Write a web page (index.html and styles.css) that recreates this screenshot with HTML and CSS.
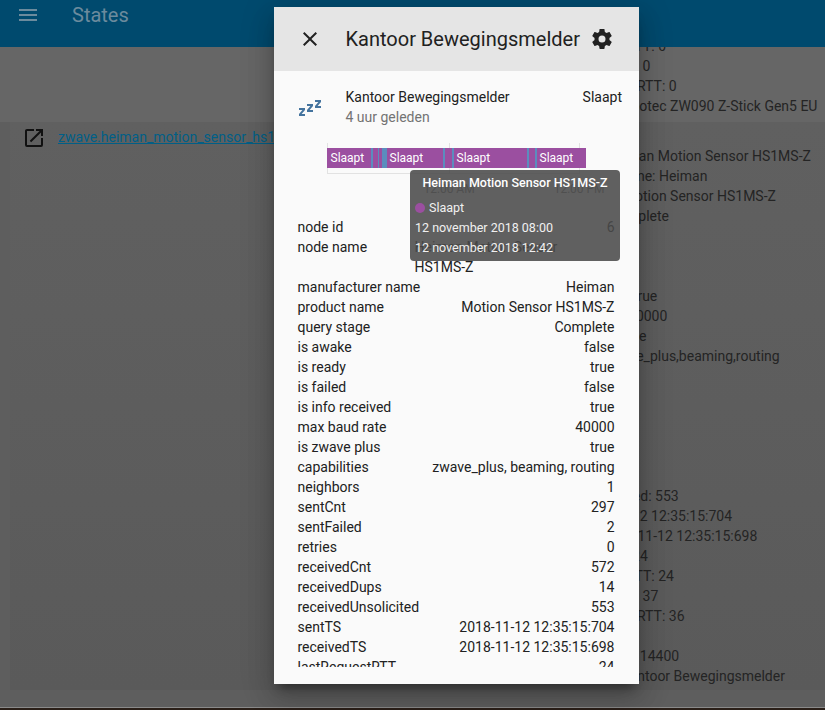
FILE: index.html
```html
<!DOCTYPE html>
<html lang="nl">
<head>
<meta charset="utf-8">
<title>States</title>
<link rel="stylesheet" href="styles.css">
</head>
<body>
<div class="page">
  <header class="appbar">
    <svg class="appbar-icon" viewBox="0 0 24 24"><path d="M3,6H21V8H3V6M3,11H21V13H3V11M3,16H21V18H3V16Z"/></svg>
    <div class="appbar-title">States</div>
  </header>
  <main class="states">
    <section class="row row-first">
      <div class="attrs">
        <div>averageRequestRTT: 0</div>
        <div>lastResponseRTT: 0</div>
        <div>averageResponseRTT: 0</div>
        <div>product_name: Aeotec ZW090 Z-Stick Gen5 EU</div>
      </div>
    </section>
    <section class="row row-second">
      <div class="entity">
        <svg class="entity-icon" viewBox="0 0 24 24"><path d="M14,3V5H17.59L7.76,14.83L9.17,16.24L19,6.41V10H21V3M19,19H5V5H12V3H5C3.89,3 3,3.9 3,5V19A2,2 0 0,0 5,21H19A2,2 0 0,0 21,19V12H19V19Z"/></svg>
        <a class="entity-link">zwave.heiman_motion_sensor_hs1ms_z</a>
      </div>
      <div class="attrs">
        <div>node_id: 6</div>
        <div>node_name: Heiman Motion Sensor HS1MS-Z</div>
        <div>manufacturer_name: Heiman</div>
        <div>product_name: Motion Sensor HS1MS-Z</div>
        <div>query_stage: Complete</div>
        <div>is_awake: false</div>
        <div>is_ready: true</div>
        <div>is_failed: false</div>
        <div>is_info_received: true</div>
        <div>max_baud_rate: 40000</div>
        <div>is_zwave_plus: true</div>
        <div>capabilities: zwave_plus,beaming,routing</div>
        <div>neighbors: 1</div>
        <div>sentCnt: 297</div>
        <div>sentFailed: 2</div>
        <div>retries: 0</div>
        <div>receivedCnt: 572</div>
        <div>receivedDups: 14</div>
        <div>receivedUnsolicited: 553</div>
        <div>sentTS: 2018-11-12 12:35:15:704</div>
        <div>receivedTS: 2018-11-12 12:35:15:698</div>
        <div>lastRequestRTT: 24</div>
        <div>averageRequestRTT: 24</div>
        <div>lastResponseRTT: 37</div>
        <div>averageResponseRTT: 36</div>
        <div>location:</div>
        <div>wake_up_interval: 14400</div>
        <div>friendly_name: Kantoor Bewegingsmelder</div>
      </div>
    </section>
  </main>
  <div class="page-edge"></div>
</div>

<div class="dialog">
  <div class="dialog-head">
    <svg class="head-icon" viewBox="0 0 24 24"><path d="M19,6.41L17.59,5L12,10.59L6.41,5L5,6.41L10.59,12L5,17.59L6.41,19L12,13.41L17.59,19L19,17.59L13.41,12L19,6.41Z"/></svg>
    <div class="dialog-title">Kantoor Bewegingsmelder</div>
    <svg class="head-icon" viewBox="0 0 24 24"><path d="M12,15.5A3.5,3.5 0 0,1 8.5,12A3.5,3.5 0 0,1 12,8.5A3.5,3.5 0 0,1 15.5,12A3.5,3.5 0 0,1 12,15.5M19.43,12.97C19.47,12.65 19.5,12.33 19.5,12C19.5,11.67 19.47,11.34 19.43,11L21.54,9.37C21.73,9.22 21.78,8.95 21.66,8.73L19.66,5.27C19.54,5.05 19.27,4.96 19.05,5.05L16.56,6.05C16.04,5.66 15.5,5.32 14.87,5.07L14.5,2.42C14.46,2.18 14.25,2 14,2H10C9.75,2 9.54,2.18 9.5,2.42L9.13,5.07C8.5,5.32 7.96,5.66 7.44,6.05L4.95,5.05C4.73,4.96 4.46,5.05 4.34,5.27L2.34,8.73C2.21,8.95 2.27,9.22 2.46,9.37L4.57,11C4.53,11.34 4.5,11.67 4.5,12C4.5,12.33 4.53,12.65 4.57,12.97L2.46,14.63C2.27,14.78 2.21,15.05 2.34,15.27L4.34,18.73C4.46,18.95 4.73,19.03 4.95,18.95L7.44,17.94C7.96,18.34 8.5,18.68 9.13,18.93L9.5,21.58C9.54,21.82 9.75,22 10,22H14C14.25,22 14.46,21.82 14.5,21.58L14.87,18.93C15.5,18.67 16.04,18.34 16.56,17.94L19.05,18.95C19.27,19.03 19.54,18.95 19.66,18.73L21.66,15.27C21.78,15.05 21.73,14.78 21.54,14.63L19.43,12.97Z"/></svg>
  </div>
  <div class="dialog-body">
    <div class="info">
      <svg class="info-icon" viewBox="0 0 24 24"><path d="M23,12H17V10L20.39,6H17V4H23V6L19.62,10H23V12M15,16H9V14L12.39,10H9V8H15V10L11.62,14H15V16M7,20H1V18L4.39,14H1V12H7V14L3.62,18H7V20Z"/></svg>
      <div class="info-text">
        <div>Kantoor Bewegingsmelder</div>
        <div class="info-time">4 uur geleden</div>
      </div>
      <div>Slaapt</div>
    </div>

    <div class="chart">
      <div class="grid-v grid-a"></div>
      <div class="grid-v grid-b"></div>
      <div class="grid-v grid-c"></div>
      <div class="grid-h"></div>
      <div class="bars">
        <div class="seg seg-first sleep" style="width:44px">Slaapt</div>
        <div class="seg wake" style="width:2px"></div>
        <div class="seg sleep" style="width:5px"></div>
        <div class="seg wake" style="width:1px"></div>
        <div class="seg sleep" style="width:3px"></div>
        <div class="seg wake" style="width:5px"></div>
        <div class="seg sleep" style="width:56px">Slaapt</div>
        <div class="seg wake" style="width:2px"></div>
        <div class="seg sleep" style="width:7px"></div>
        <div class="seg wake" style="width:2px"></div>
        <div class="seg sleep" style="width:73px">Slaapt</div>
        <div class="seg wake" style="width:2px"></div>
        <div class="seg sleep" style="width:6px"></div>
        <div class="seg wake" style="width:2px"></div>
        <div class="seg sleep" style="width:49px">Slaapt</div>
      </div>
      <div class="axis">
        <span>12:00 AM</span>
        <span>12:00 PM</span>
      </div>
    </div>

    <div class="data">
      <div class="entry"><div>node id</div><div class="value">6</div></div>
      <div class="entry"><div>node name</div><div class="value">Heiman Motion Sensor <span class="nowrap">HS1MS-Z</span></div></div>
      <div class="entry"><div>manufacturer name</div><div class="value">Heiman</div></div>
      <div class="entry"><div>product name</div><div class="value">Motion Sensor HS1MS-Z</div></div>
      <div class="entry"><div>query stage</div><div class="value">Complete</div></div>
      <div class="entry"><div>is awake</div><div class="value">false</div></div>
      <div class="entry"><div>is ready</div><div class="value">true</div></div>
      <div class="entry"><div>is failed</div><div class="value">false</div></div>
      <div class="entry"><div>is info received</div><div class="value">true</div></div>
      <div class="entry"><div>max baud rate</div><div class="value">40000</div></div>
      <div class="entry"><div>is zwave plus</div><div class="value">true</div></div>
      <div class="entry"><div>capabilities</div><div class="value">zwave_plus, beaming, routing</div></div>
      <div class="entry"><div>neighbors</div><div class="value">1</div></div>
      <div class="entry"><div>sentCnt</div><div class="value">297</div></div>
      <div class="entry"><div>sentFailed</div><div class="value">2</div></div>
      <div class="entry"><div>retries</div><div class="value">0</div></div>
      <div class="entry"><div>receivedCnt</div><div class="value">572</div></div>
      <div class="entry"><div>receivedDups</div><div class="value">14</div></div>
      <div class="entry"><div>receivedUnsolicited</div><div class="value">553</div></div>
      <div class="entry"><div>sentTS</div><div class="value">2018-11-12 12:35:15:704</div></div>
      <div class="entry"><div>receivedTS</div><div class="value">2018-11-12 12:35:15:698</div></div>
      <div class="entry"><div>lastRequestRTT</div><div class="value">24</div></div>
    </div>

    <div class="tooltip">
      <div class="tooltip-title">Heiman Motion Sensor HS1MS-Z</div>
      <div class="tooltip-state"><span class="tooltip-dot"></span>Slaapt</div>
      <div>12 november 2018 08:00</div>
      <div>12 november 2018 12:42</div>
    </div>
  </div>
</div>
</body>
</html>
```
FILE: styles.css
```css
* { box-sizing: border-box; }
html, body { margin: 0; height: 100%; }
body {
  font-family: Roboto, "Liberation Sans", sans-serif;
  font-size: 14px;
  line-height: 20px;
  color: #212121;
  background: #5e5e5e;
  overflow: hidden;
}
.page { height: 710px; display: flex; flex-direction: column; }
.appbar {
  position: relative;
  z-index: 1;
  height: 47px;
  background: #004a6e;
  display: flex;
  align-items: flex-start;
  padding: 3px 0 0 16px;
  flex: none;
}
.appbar-icon { width: 24px; height: 24px; fill: #6c8b9d; }
.appbar-title {
  margin-left: 32px;
  font-size: 20px;
  line-height: 24px;
  color: #6c8b9d;
}
.states { flex: 1; display: flex; flex-direction: column; }
.row { display: flex; }
.row-first { height: 75px; background: #666; align-items: flex-end; padding: 0 0 6px 526.5px; }
.row-first .attrs { flex: none; }
.row-second {
  margin-left: 10px;
  height: 568px;
  background: linear-gradient(#606060, #5a5a5a);
  padding-top: 4px;
}
.entity { width: 516.5px; display: flex; padding-left: 12px; flex: none; }
.entity-icon { width: 24px; height: 24px; fill: #111; margin-right: 12px; flex: none; }
.entity-link { color: #005f87; text-decoration: underline; line-height: 22px; }
.attrs { color: #242424; white-space: nowrap; }
.page-edge { height: 3px; background: #2a1f18; border-top: 1px solid #8a8a8a; flex: none; }

.dialog {
  position: absolute;
  z-index: 2;
  left: 274px;
  top: 7px;
  width: 365px;
  height: 677px;
  background: #fafafa;
  display: flex;
  flex-direction: column;
  box-shadow: 0 16px 24px 2px rgba(0,0,0,.14), 0 6px 30px 5px rgba(0,0,0,.12), 0 8px 10px -5px rgba(0,0,0,.4);
}
.dialog-head {
  flex: none;
  height: 64px;
  background: #e5e5e5;
  display: flex;
  align-items: center;
  padding: 0 25px 0 23.5px;
}
.head-icon { width: 24px; height: 24px; fill: #212121; flex: none; }
.dialog-title { flex: 1; margin-left: 24px; font-size: 20px; line-height: 24px; white-space: nowrap; }
.dialog-body { position: relative; height: 596px; overflow: hidden; padding: 16px 17px 0 23.5px; }
.info { display: flex; align-items: flex-start; }
.info-icon { width: 24px; height: 24px; fill: #44739e; flex: none; margin: 9px 24px 0 0; }
.info-text { flex: 1; }
.info-time { color: #737373; }

.chart { position: relative; height: 90px; }
.bars { position: absolute; left: 29px; top: 21px; display: flex; height: 20px; }
.seg { height: 20px; font-size: 12px; line-height: 20px; color: #fff; padding-left: 3px; overflow: hidden; flex: none; }
.seg-first { padding-left: 4px; }
.sleep { background: #9b4fa0; }
.wake { background: #5b8dbe; padding: 0; }
.grid-v { position: absolute; top: 16px; width: 1px; height: 30px; background: #e2e2e2; }
.grid-a { left: 29px; }
.grid-b { left: 151px; }
.grid-c { left: 281px; }
.grid-h { position: absolute; left: 29px; top: 46px; width: 253px; height: 1px; background: #e2e2e2; }
.axis { position: absolute; left: 126px; top: 52px; display: flex; gap: 79px; color: #777; font-size: 12px; white-space: nowrap; }

.data { padding-right: 7.5px; }
.entry { display: flex; justify-content: space-between; }
.value { max-width: 200px; }
.nowrap { white-space: nowrap; }

.tooltip {
  position: absolute;
  left: 136px;
  top: 99px;
  width: 210px;
  height: 91px;
  padding: 3px 5px 0;
  border-radius: 4px;
  background: rgba(74,74,74,.88);
  color: #f0f0f0;
  font-size: 12.5px;
  white-space: nowrap;
}
.tooltip-title { font-weight: 500; text-align: center; color: #fff; margin-bottom: 5px; }
.tooltip-state { display: flex; align-items: center; gap: 4px; }
.tooltip-dot { flex: none; width: 10px; height: 10px; border-radius: 50%; background: #9b4fa0; }
```
